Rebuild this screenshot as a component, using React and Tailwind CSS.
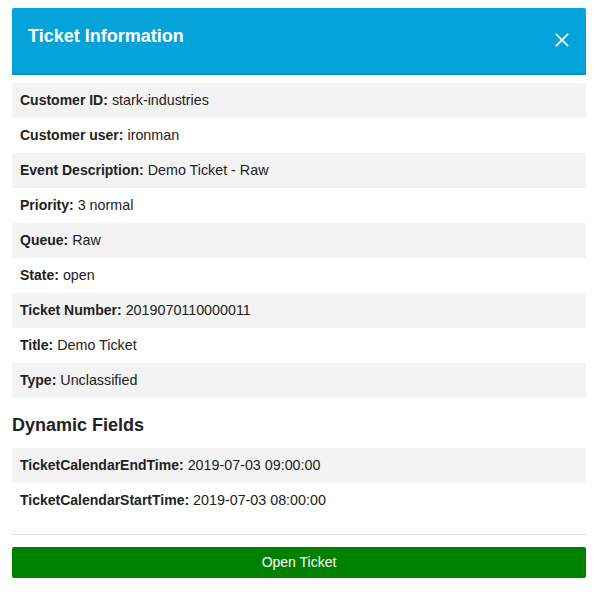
import React from "react";

const rows = [
  ["Customer ID:", "stark-industries"],
  ["Customer user:", "ironman"],
  ["Event Description:", "Demo Ticket - Raw"],
  ["Priority:", "3 normal"],
  ["Queue:", "Raw"],
  ["State:", "open"],
  ["Ticket Number:", "2019070110000011"],
  ["Title:", "Demo Ticket"],
  ["Type:", "Unclassified"],
];

const dyn = [
  ["TicketCalendarEndTime:", "2019-07-03 09:00:00"],
  ["TicketCalendarStartTime:", "2019-07-03 08:00:00"],
];

function Row({ label, value, i }) {
  return (
    <div className={`h-[35px] flex items-center px-2 text-[14px] text-[#222] ${i % 2 === 0 ? "bg-[#f3f3f3]" : "bg-white"}`}>
      <span className="font-bold">{label}</span>
      <span className="ml-1 text-[14.3px]">{value}</span>
    </div>
  );
}

export default function App() {
  return (
    <div className="w-[598px] h-[597px] bg-white px-3 pt-2 font-['Liberation_Sans',Arial,sans-serif]">
      <div className="h-[67px] bg-[#06a3da] border-b-2 border-[#0490c2] flex items-start justify-between pl-4 pr-4 pt-[17px] rounded-t-[2px]">
        <h1 className="text-white font-bold text-[18px] leading-[22px]">Ticket Information</h1>
        <svg width="14" height="14" viewBox="0 0 14 14" className="mt-[8px] mr-[1px]">
          <path d="M1.5 1.5 L12.5 12.5 M12.5 1.5 L1.5 12.5" stroke="white" strokeWidth="1.7" strokeLinecap="square" />
        </svg>
      </div>
      <div className="mt-2">
        {rows.map((r, i) => (
          <Row key={i} label={r[0]} value={r[1]} i={i} />
        ))}
      </div>
      <h2 className="mt-[16px] mb-[12px] text-[18px] leading-[22px] font-bold text-[#222]">Dynamic Fields</h2>
      <div>
        {dyn.map((r, i) => (
          <Row key={i} label={r[0]} value={r[1]} i={i} />
        ))}
      </div>
      <div className="mt-[16px] border-t border-[#dddddd]" />
      <button className="mt-[12px] w-full h-[31px] bg-[#008000] text-white text-[14px] rounded-[2px] flex items-center justify-center">
        Open Ticket
      </button>
    </div>
  );
}
